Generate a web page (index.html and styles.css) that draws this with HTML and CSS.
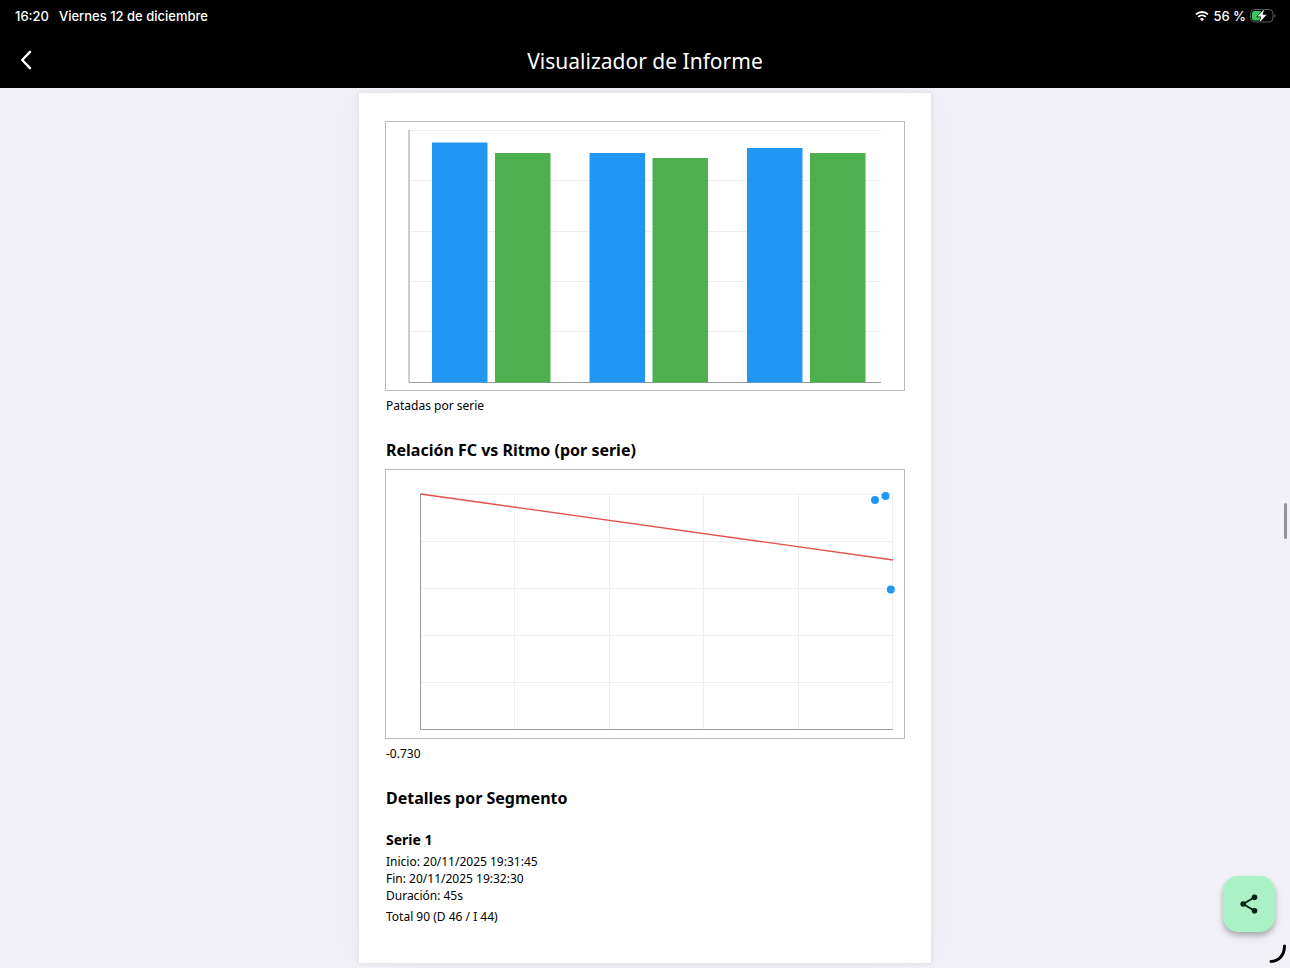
FILE: index.html
```html
<!DOCTYPE html>
<html lang="es">
  <head>
    <meta charset="UTF-8" />
    <meta name="viewport" content="width=device-width, initial-scale=1.0" />
    <title>Visualizador de Informe</title>
    <link rel="stylesheet" href="styles.css">
  </head>
  <body>
    <header class="top">
      <div class="status-bar">
        <span class="clock">16:20</span>
        <span>Viernes 12 de diciembre</span>
        <div class="status-icons">
          <svg width="14" height="12" viewBox="0 0 14 12" fill="none" stroke="#fff" stroke-width="1.9">
            <path d="M1 4.4a8.6 8.6 0 0 1 12 0M3.2 6.9a5.5 5.5 0 0 1 7.6 0" />
            <path d="M7 11.3 4.9 9.1a3 3 0 0 1 4.2 0z" fill="#fff" stroke="none" />
          </svg>
          <span>56 %</span>
          <svg width="26" height="14" viewBox="0 0 26 14">
            <rect x="0.5" y="0.5" width="22.5" height="12.5" rx="4" fill="none" stroke="#5c5c5c" />
            <path d="M24.3 4.6c1.6.7 1.6 3.8 0 4.5z" fill="#5c5c5c" />
            <path d="M4.5 2H11v9.5H4.5A2.5 2.5 0 0 1 2 9V4.5A2.5 2.5 0 0 1 4.5 2z" fill="#34c759" />
            <path d="M14.2 0.2 7.4 7.6h3.8L9.4 13.6l7.2-7.9h-4z" fill="#fff" stroke="#000" stroke-width="1.2" paint-order="stroke" />
          </svg>
        </div>
      </div>
      <nav class="nav-bar">
        <button class="back" type="button" aria-label="Volver">
          <svg width="12" height="20" viewBox="0 0 12 20" fill="none" stroke="#fff" stroke-width="2.4" stroke-linecap="round" stroke-linejoin="round">
            <path d="M10 1.8 2.2 10 10 18.2" />
          </svg>
        </button>
        <h1>Visualizador de Informe</h1>
      </nav>
    </header>

    <main class="viewer">
      <article class="page">
        <figure>
          <svg class="chart" viewBox="0 0 520 270" role="img" aria-label="Patadas por serie">
            <rect class="frame" x="0.5" y="0.5" width="519" height="269" />
            <path class="grid" d="M24 9.5H496M24 59.5H496M24 110.5H496M24 160.5H496M24 210.5H496" />
            <path class="axis" d="M24 9V261.5H496" />
            <g class="right">
              <rect x="47" y="21.5" width="55.5" height="240" />
              <rect x="204.5" y="32" width="55.5" height="229.5" />
              <rect x="362" y="27" width="55.5" height="234.5" />
            </g>
            <g class="left">
              <rect x="110" y="32" width="55.5" height="229.5" />
              <rect x="267.5" y="37" width="55.5" height="224.5" />
              <rect x="425" y="32" width="55.5" height="229.5" />
            </g>
          </svg>
          <figcaption>Patadas por serie</figcaption>
        </figure>

        <h2>Relación FC vs Ritmo (por serie)</h2>
        <figure>
          <svg class="chart" viewBox="0 0 520 270" role="img" aria-label="Relación FC vs Ritmo">
            <rect class="frame" x="0.5" y="0.5" width="519" height="269" />
            <path class="grid" d="M35 25H508M35 72.5H508M35 119.5H508M35 166.5H508M35 213.5H508" />
            <path class="grid" d="M129.5 25V260M224.5 25V260M318.5 25V260M413.5 25V260M507.5 25V260" />
            <path class="axis" d="M35.5 25V260.5H508" />
            <path class="trend" d="M35.5 25 508 91" />
            <g class="points">
              <circle cx="490" cy="31" r="4" />
              <circle cx="500.5" cy="27" r="4" />
              <circle cx="505.8" cy="120.5" r="4" />
            </g>
          </svg>
          <figcaption>-0.730</figcaption>
        </figure>

        <h2>Detalles por Segmento</h2>
        <section class="segment">
          <h3>Serie 1</h3>
          <p>Inicio: 20/11/2025 19:31:45</p>
          <p>Fin: 20/11/2025 19:32:30</p>
          <p>Duración: 45s</p>
          <p class="total">Total 90 (D 46 / I 44)</p>
        </section>
      </article>
    </main>

    <div class="scroll-thumb"></div>
    <button class="share" type="button" aria-label="Compartir">
      <svg width="18" height="20" viewBox="0 0 18 20" fill="#00210f">
        <path d="M14.5 3.2 3.2 10l11.3 6.8" fill="none" stroke="#00210f" stroke-width="1.8" />
        <circle cx="14.5" cy="3.2" r="2.8" />
        <circle cx="3.2" cy="10" r="2.8" />
        <circle cx="14.5" cy="16.8" r="2.8" />
      </svg>
    </button>
    <svg class="corner" width="18" height="20" viewBox="0 0 18 20" fill="none" stroke="#000" stroke-width="3" stroke-linecap="round">
      <path d="M15.5 2C15.5 11 10 17 2 17.5" />
    </svg>
  </body>
</html>
```

FILE: styles.css
```css
* {
  box-sizing: border-box;
}
body {
  margin: 0;
  min-height: 100vh;
  display: flex;
  flex-direction: column;
  font-family: "Noto Sans", sans-serif;
  background-color: #f2f1f8;
  color: #000;
}
h1,
h2,
h3,
p,
figure {
  margin: 0;
}
button {
  border: none;
  padding: 0;
  cursor: pointer;
}
svg {
  display: block;
}
.top {
  background-color: #000;
  color: #fff;
}
.status-bar {
  display: flex;
  align-items: center;
  gap: 10px;
  height: 32px;
  padding: 0 14px 0 15px;
  font-family: Inter, sans-serif;
  font-size: 13px;
  font-weight: 500;
}
.status-icons {
  display: flex;
  align-items: center;
  gap: 4px;
  margin-left: auto;
}
.nav-bar {
  display: grid;
  grid-template-columns: 56px 1fr 56px;
  align-items: center;
  height: 56px;
}
.nav-bar h1 {
  padding-top: 2px;
  font-size: 21px;
  font-weight: 400;
  text-align: center;
}
.back {
  display: flex;
  align-items: center;
  height: 56px;
  padding-left: 20px;
  background: none;
}
.viewer {
  flex: 1;
  padding: 5px 16px;
}
.page {
  max-width: 572px;
  margin: 0 auto;
  padding: 28px 26px 38px;
  background-color: #fff;
  box-shadow: 0 0 4px rgba(50, 50, 70, 0.1), 0 0 56px rgba(50, 50, 80, 0.05);
}
.chart {
  width: 100%;
  height: auto;
}
.frame {
  fill: none;
  stroke: #b9b9b9;
}
.grid {
  fill: none;
  stroke: #eee;
}
.axis {
  fill: none;
  stroke: #999;
}
.right,
.points {
  fill: #2196f3;
}
.left {
  fill: #4caf50;
}
.trend {
  fill: none;
  stroke: #e35248;
  stroke-width: 1.3;
}
figcaption,
h2,
.segment {
  padding-left: 1px;
}
figcaption,
.segment p {
  font-size: 12px;
  line-height: 17px;
}
figcaption {
  margin-top: 6px;
}
h2 {
  margin: 24px 0 7px;
  font-size: 16px;
  line-height: 24px;
}
.segment {
  padding-top: 13px;
}
.segment h3 {
  margin-bottom: 3px;
  font-size: 14px;
  line-height: 20px;
}
.segment .total {
  margin-top: 4px;
}
.scroll-thumb {
  position: fixed;
  top: 503px;
  right: 3px;
  width: 3px;
  height: 36px;
  border-radius: 2px;
  background-color: #929298;
}
.share {
  position: fixed;
  right: 15px;
  bottom: 36px;
  display: flex;
  align-items: center;
  justify-content: center;
  width: 52px;
  height: 56px;
  border-radius: 15px;
  background-color: #aaf2c6;
  box-shadow: 0 3px 5px rgba(0, 0, 0, 0.22), 0 5px 10px rgba(0, 0, 0, 0.12);
}
.corner {
  position: fixed;
  right: 3px;
  bottom: 4px;
}
```
